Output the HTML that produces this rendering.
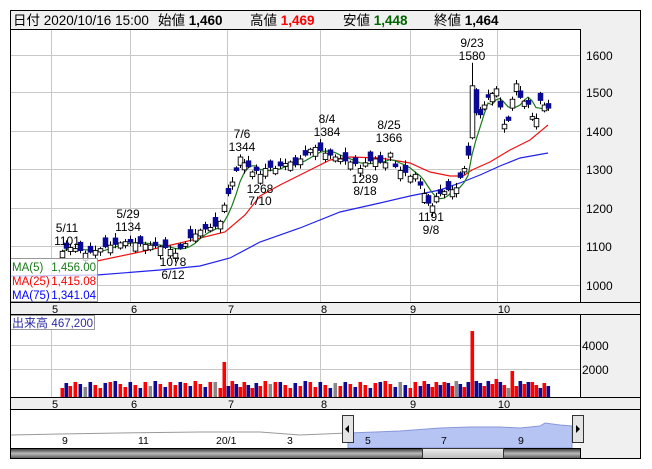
<!DOCTYPE html>
<html><head><meta charset="utf-8"><style>
body{margin:0;background:#fff;width:652px;height:469px;overflow:hidden;font-family:"Liberation Sans","Noto Sans CJK JP",sans-serif}
svg{position:absolute;left:0;top:0}
</style></head><body>
<svg id="s" width="652" height="469" viewBox="0 0 652 469" font-family="Liberation Sans, Noto Sans CJK JP, sans-serif">
<rect x="0" y="0" width="652" height="469" fill="#fff"/>
<rect x="10.5" y="10.5" width="630" height="19" fill="#f0f0f0" stroke="#000"/>
<text y="25" font-size="13.5" fill="#000"><tspan x="13">日付 2020/10/16 15:00</tspan><tspan x="158">始値 </tspan><tspan font-weight="bold">1,460</tspan><tspan x="250">高値 </tspan><tspan font-weight="bold" fill="#f00">1,469</tspan><tspan x="343">安値 </tspan><tspan font-weight="bold" fill="#006400">1,448</tspan><tspan x="434">終値 </tspan><tspan font-weight="bold">1,464</tspan></text>
<rect x="580" y="29" width="61" height="430" fill="#f0f0f0"/>
<g id="grid" stroke="#c8c8c8" stroke-width="1"></g>
<g id="ma"></g>
<g id="candles"></g>
<g id="vol"></g>
<g font-size="12" fill="#000" text-anchor="middle">
<text x="67" y="232">5/11</text><text x="67" y="245">1101</text>
<text x="128" y="218">5/29</text><text x="128" y="231">1134</text>
<text x="173" y="266">1078</text><text x="173" y="279">6/12</text>
<text x="242" y="138">7/6</text><text x="242" y="151">1344</text>
<text x="260" y="193">1268</text><text x="260" y="205">7/10</text>
<text x="327" y="123">8/4</text><text x="327" y="136">1384</text>
<text x="365" y="183">1289</text><text x="365" y="195">8/18</text>
<text x="389" y="129">8/25</text><text x="389" y="142">1366</text>
<text x="431" y="221">1191</text><text x="431" y="234">9/8</text>
<text x="472" y="47">9/23</text><text x="472" y="60">1580</text>
</g>
<g font-size="12" fill="#000">
<text x="586" y="60">1600</text><text x="586" y="97">1500</text><text x="586" y="136">1400</text><text x="586" y="174">1300</text><text x="586" y="213">1200</text><text x="586" y="251">1100</text><text x="586" y="290">1000</text>
<text x="582" y="350">4000</text><text x="582" y="374">2000</text>
</g>
<rect x="10.5" y="302.5" width="630" height="12" fill="#efefef" stroke="#000"/>
<rect x="10.5" y="397.5" width="630" height="12" fill="#efefef" stroke="#000"/>
<g font-size="11" fill="#000" text-anchor="middle">
<text x="55" y="313">5</text><text x="134" y="313">6</text><text x="231" y="313">7</text><text x="324" y="313">8</text><text x="413" y="313">9</text><text x="504" y="313">10</text>
<text x="55" y="408">5</text><text x="134" y="408">6</text><text x="231" y="408">7</text><text x="324" y="408">8</text><text x="413" y="408">9</text><text x="504" y="408">10</text>
</g>
<line x1="580.5" y1="29" x2="580.5" y2="302" stroke="#000"/>
<line x1="580.5" y1="315" x2="580.5" y2="397" stroke="#000"/>
<rect x="10.5" y="258.5" width="87" height="43" fill="#fff" fill-opacity="0.75" stroke="#999"/>
<g font-size="11.5">
<text x="12" y="271" fill="#1a7a1a">MA(5)</text><text x="96" y="271" fill="#1a7a1a" text-anchor="end">1,456.00</text>
<text x="12" y="285" fill="#f00">MA(25)</text><text x="96" y="285" fill="#f00" text-anchor="end">1,415.08</text>
<text x="12" y="299" fill="#00f">MA(75)</text><text x="96" y="299" fill="#00f" text-anchor="end">1,341.04</text>
</g>
<rect x="10.5" y="315.5" width="84" height="14" fill="#fff" stroke="#999"/>
<text x="12" y="327" font-size="12" fill="#2a2aa0">出来高</text><text x="93" y="327" font-size="11.5" fill="#2a2aa0" text-anchor="end">467,200</text>
<path d="M11 435 L60 434 L120 433 L200 432 L260 432 L300 435 L348 433 L348 448 L11 448Z" fill="#fff"/>
<path d="M11 435 L60 434 L120 433 L200 432 L260 432 L300 435 L348 433" fill="none" stroke="#999"/>
<path d="M348 433 L400 431 L440 428 L470 427 L500 427 L520 428 L540 426 L545 423 L560 425 L572 426 L572 448 L348 448Z" fill="#b6c4f4" stroke="#8a96d8"/>
<g font-size="10.5" fill="#000"><text x="62" y="444">9</text><text x="138" y="444">11</text><text x="216" y="444">20/1</text><text x="287" y="444">3</text><text x="365" y="444">5</text><text x="441" y="444">7</text><text x="518" y="444">9</text></g>
<rect x="342.5" y="415.5" width="11" height="27" fill="#e4e4e4" stroke="#333"/><path d="M345 429 L349 425 L349 433Z" fill="#000"/>
<rect x="572.5" y="415.5" width="11" height="27" fill="#e4e4e4" stroke="#333"/><path d="M580 429 L576 425 L576 433Z" fill="#000"/>
<defs><linearGradient id="g" x1="0" y1="0" x2="0" y2="1"><stop offset="0" stop-color="#333"/><stop offset="0.5" stop-color="#bbb"/><stop offset="1" stop-color="#555"/></linearGradient>
<linearGradient id="g2" x1="0" y1="0" x2="0" y2="1"><stop offset="0" stop-color="#eee"/><stop offset="1" stop-color="#bbb"/></linearGradient></defs>
<rect x="10.5" y="448.5" width="570" height="10" fill="url(#g)" stroke="#000"/>
<rect x="422.5" y="448.5" width="81" height="10" fill="url(#g2)" stroke="#333"/>
<rect x="10.5" y="10.5" width="630" height="448" fill="none" stroke="#000"/>
</svg>
<script>
var NS="http://www.w3.org/2000/svg";
function el(p,t,a){var e=document.createElementNS(NS,t);for(var k in a)e.setAttribute(k,a[k]);document.getElementById(p).appendChild(e);return e;}
[55,92,131,169,208,246,285].forEach(function(y){el("grid","line",{x1:11,x2:580,y1:y+.5,y2:y+.5});});
[51,130,227,320,410,497].forEach(function(x){el("grid","line",{x1:x+.5,x2:x+.5,y1:30,y2:302});el("grid","line",{x1:x+.5,x2:x+.5,y1:315,y2:397});});
[345,369].forEach(function(y){el("grid","line",{x1:11,x2:580,y1:y+.5,y2:y+.5});});
function Y(p){return 55+(1600-p)*0.385;}
var pts=[[62,1090],[66,1098],[70,1100],[75,1097],[80,1092],[85,1085],[90,1088],[95,1092],[100,1097],[105,1102],[110,1106],[115,1108],[120,1112],[125,1115],[130,1114],[135,1112],[140,1110],[145,1108],[150,1106],[155,1105],[160,1102],[165,1100],[170,1095],[175,1085],[180,1098],[185,1110],[190,1125],[195,1135],[200,1145],[205,1148],[210,1152],[215,1155],[220,1168],[224,1210],[228,1240],[232,1270],[236,1300],[240,1335],[244,1320],[248,1310],[252,1296],[256,1300],[260,1290],[265,1305],[270,1308],[275,1305],[280,1312],[285,1318],[290,1322],[295,1315],[300,1330],[305,1340],[310,1355],[315,1360],[320,1352],[325,1345],[330,1340],[335,1335],[340,1330],[345,1325],[350,1322],[355,1318],[360,1305],[365,1320],[370,1325],[375,1330],[380,1322],[385,1320],[390,1345],[395,1310],[400,1300],[405,1295],[410,1285],[415,1290],[420,1262],[424,1240],[428,1215],[432,1208],[436,1232],[440,1240],[444,1245],[448,1250],[452,1250],[456,1255],[460,1282],[464,1305],[468,1340],[472,1520],[476,1450],[480,1445],[484,1470],[488,1490],[492,1500],[496,1512],[500,1465],[504,1420],[508,1430],[512,1485],[516,1525],[520,1490],[524,1480],[528,1472],[532,1440],[536,1435],[540,1482],[544,1470],[548,1462]];
pts.forEach(function(d,i){var x=d[0],c=d[1];
 var r=(i*53+17)%11, dir=((i*7+3)%5<2)?1:-1;
 var o=c+dir*(7+r*1.6), hi, lo;
 if(x==472){o=1385;}
 if(x==476){o=1510;}
 var up=c>=o; hi=Math.max(o,c)+4+(i%4)*3; lo=Math.min(o,c)-4-(i%3)*3;
 if(x==472)hi=1580;
 el("candles","line",{x1:x+.5,x2:x+.5,y1:Y(hi),y2:Y(lo),stroke:"#000"});
 var t=Y(Math.max(o,c)),b=Y(Math.min(o,c));
 el("candles","rect",{x:x-1.8,y:t,width:4.6,height:Math.max(1,b-t),fill:up?"#fff":"#0a0a96",stroke:up?"#000":"#0a0a96","stroke-width":0.9});
 var v=(i%7==3)?15:(9+(i*37%8));if(x==472)v=66;if(x==512)v=26;if(x==224)v=35;if(x==496)v=18;if(x==476)v=16;
 var col=up?"#f00":"#0a0a96";if(i%13==5)col="#888";
 el("vol","rect",{x:x-1.5,y:397-v,width:3.6,height:v,fill:col});
});
function line(ps,col){el("ma","polyline",{points:ps.map(function(p){return p.join(",")}).join(" "),fill:"none",stroke:col,"stroke-width":1.2});}
line([[11,276],[97,275],[160,270],[200,266],[230,258],[260,242],[300,228],[340,212],[380,203],[410,196],[440,190],[460,183],[480,175],[500,166],[520,158],[548,153]],"#2222ee");
line([[97,261],[140,252],[180,243],[225,232],[245,215],[260,196],[280,185],[300,175],[330,160],[350,157],[380,158],[410,163],[430,172],[450,176],[463,176],[472,170],[490,162],[510,150],[530,140],[548,125]],"#ee1111");
var g=[];pts.forEach(function(d,i){var s=0,n=0;for(var j=Math.max(0,i-4);j<=i;j++){s+=pts[j][1];n++;}g.push([d[0],Y(s/n).toFixed(1)]);});
line(g,"#1a7a1a");
</script>
</body></html>
